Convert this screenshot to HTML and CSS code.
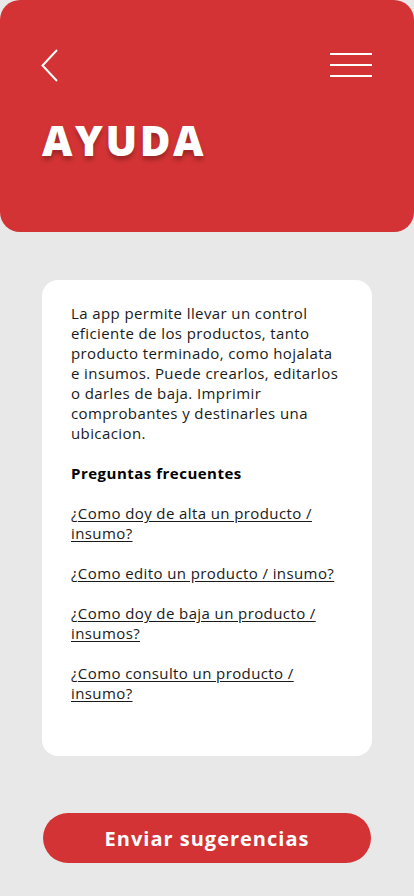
FILE: index.html
```html
<!DOCTYPE html>
<html lang="es">
<head>
<meta charset="utf-8">
<link rel="stylesheet" href="styles.css">
</head>
<body>
<header class="header">
  <div class="topbar">
    <svg class="back" width="18" height="33" viewBox="0 0 18 33"><polyline points="16,1 1.5,16.5 16,32" fill="none" stroke="#fff" stroke-width="2"/></svg>
    <svg class="menu" width="42" height="26" viewBox="0 0 42 26"><g stroke="#fff" stroke-width="2"><line x1="0" y1="2" x2="42" y2="2"/><line x1="0" y1="13" x2="42" y2="13"/><line x1="0" y1="24" x2="42" y2="24"/></g></svg>
  </div>
  <h1 class="title">AYUDA</h1>
</header>
<main class="card">
  <p class="text">La app permite llevar un control eficiente de los productos, tanto producto terminado, como hojalata e insumos. Puede crearlos, editarlos o darles de baja. Imprimir comprobantes y destinarles una ubicacion.</p>
  <p class="text bold">Preguntas frecuentes</p>
  <a class="text link" href="#">¿Como doy de alta un producto / insumo?</a>
  <a class="text link" href="#">¿Como edito un producto / insumo?</a>
  <a class="text link" href="#">¿Como doy de baja un producto / insumos?</a>
  <a class="text link" href="#">¿Como consulto un producto / insumo?</a>
</main>
<div class="actions">
  <button class="btn">Enviar sugerencias</button>
</div>
</body>
</html>
```
FILE: styles.css
```css
* { box-sizing: border-box; }
html, body { margin: 0; padding: 0; }
body {
  background: #e8e8e8;
  font-family: "Open Sans", "Liberation Sans", sans-serif;
  width: 414px;
  height: 896px;
  overflow: hidden;
}
.header {
  background: #d33334;
  height: 232px;
  border-radius: 20px;
  padding: 49px 42px 0 42px;
}
.topbar {
  display: flex;
  justify-content: space-between;
  align-items: flex-start;
}
.back { display: block; margin-left: -1px; }
.menu { display: block; margin-top: 3px; }
.title {
  margin: 30px 0 0 0;
  color: #fff;
  font-family: "Open Sans", sans-serif;
  font-weight: 800;
  font-size: 42px;
  line-height: 56px;
  letter-spacing: 2.5px;
  text-shadow: 0 4px 4px rgba(0,0,0,0.25);
}
.card {
  background: #fff;
  margin: 48px 42px 0 42px;
  border-radius: 16px;
  padding: 23px 29px 53px 29px;
  height: 476px;
  display: flex;
  flex-direction: column;
  gap: 20px;
}
.text {
  margin: 0;
  font-size: 15px;
  line-height: 20px;
  letter-spacing: 0.4px;
  color: #1a1a1a;
}
.bold { font-weight: 700; color: #000; letter-spacing: 0.5px; }
.link { color: #1a1a1a; text-decoration: underline; text-underline-offset: 2px; }
.actions {
  padding: 57px 43px 0 43px;
}
.btn {
  display: block;
  width: 100%;
  height: 50px;
  border: none;
  border-radius: 25px;
  background: #d33334;
  color: #fff;
  font-family: "Open Sans", sans-serif;
  font-weight: 700;
  font-size: 20px;
  letter-spacing: 1px;
}
```
